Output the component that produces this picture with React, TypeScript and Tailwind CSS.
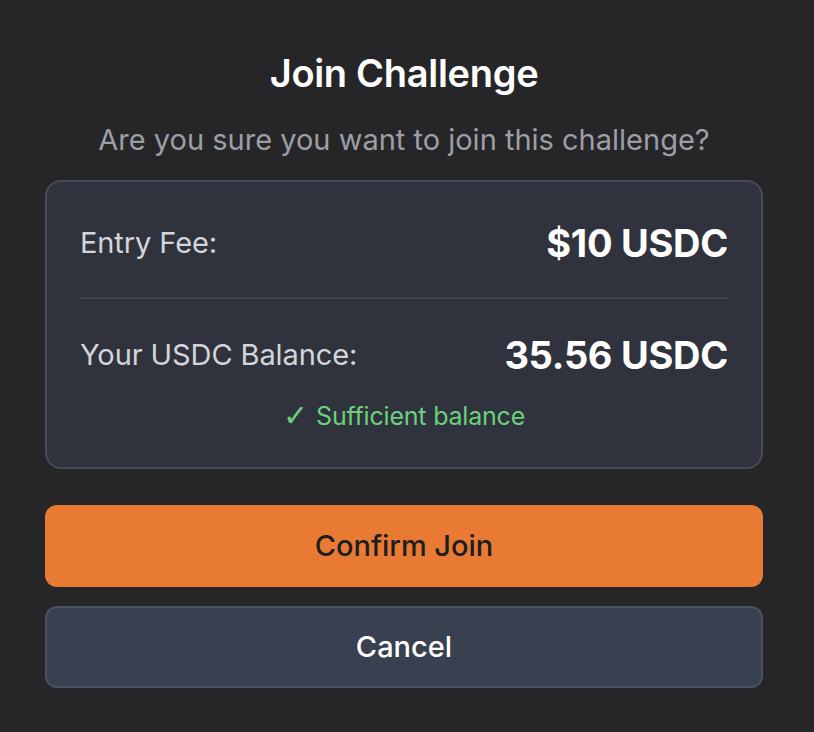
export default function App() {
  return (
    <div
      className="min-h-screen w-full bg-[#262628] pl-[45px] pr-[51px] pt-[52px]"
      style={{ fontFamily: "Inter, 'Noto Sans', sans-serif" }}
    >
      <div className="flex flex-col">
        {/* Header */}
        <h1 className="text-center text-[38px] leading-[42px] font-semibold text-white tracking-[-0.3px]">
          Join Challenge
        </h1>
        <p className="mt-[28px] text-center text-[29px] leading-[36px] text-[#9d9ea6]">
          Are you sure you want to join this challenge?
        </p>

        {/* Details card */}
        <div className="mt-[22px] rounded-[16px] border-2 border-[#464b56] bg-[#30333d] px-[33px] pt-[39px] pb-[35px]">
          <div className="flex items-center justify-between pb-[32px] border-b-2 border-[#3e434e]">
            <span className="text-[29px] leading-[44px] text-[#d4d5da] tracking-[-0.1px]">Entry Fee:</span>
            <span className="text-[38px] leading-[44px] font-bold text-white tracking-[-0.3px]">$10 USDC</span>
          </div>
          <div className="flex items-center justify-between pt-[34px]">
            <span className="text-[29px] leading-[44px] text-[#d4d5da] tracking-[-0.1px]">Your USDC Balance:</span>
            <span className="text-[38px] leading-[44px] font-bold text-white tracking-[-0.3px]">35.56 USDC</span>
          </div>
          <div className="mt-[23px] flex items-center justify-center gap-[8px] text-[25px] leading-[32px] text-[#6bd17c]">
            <span className="text-[30px] font-bold" style={{ fontFamily: "'DejaVu Sans', sans-serif" }}>
              ✓
            </span>
            <span className="tracking-[-0.2px]">Sufficient balance</span>
          </div>
        </div>

        {/* Actions */}
        <button className="mt-[36px] h-[82px] rounded-[12px] bg-[#e97a34] text-[29px] font-medium text-[#1d1d1f]">
          Confirm Join
        </button>
        <button className="mt-[19px] h-[82px] rounded-[12px] border-2 border-[#4a5262] bg-[#394150] text-[29px] font-medium text-white">
          Cancel
        </button>
      </div>
    </div>
  );
}
